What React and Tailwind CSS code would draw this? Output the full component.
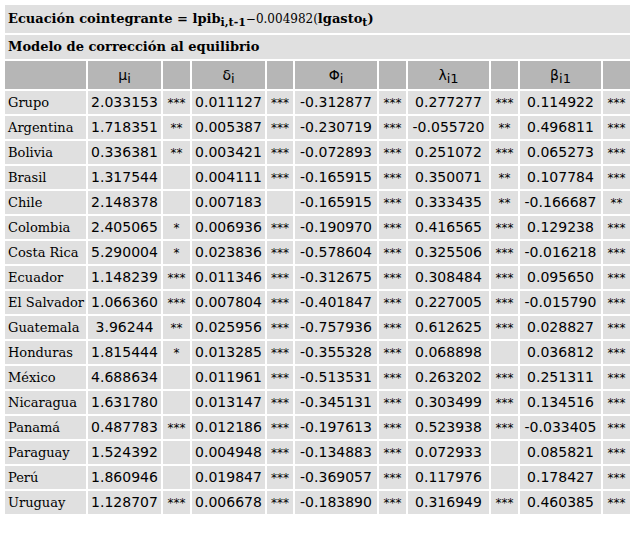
const rows = [
  ['Grupo', '2.033153', '***', '0.011127', '***', '-0.312877', '***', '0.277277', '***', '0.114922', '***'],
  ['Argentina', '1.718351', '**', '0.005387', '***', '-0.230719', '***', '-0.055720', '**', '0.496811', '***'],
  ['Bolivia', '0.336381', '**', '0.003421', '***', '-0.072893', '***', '0.251072', '***', '0.065273', '***'],
  ['Brasil', '1.317544', '', '0.004111', '***', '-0.165915', '***', '0.350071', '**', '0.107784', '***'],
  ['Chile', '2.148378', '', '0.007183', '', '-0.165915', '***', '0.333435', '**', '-0.166687', '**'],
  ['Colombia', '2.405065', '*', '0.006936', '***', '-0.190970', '***', '0.416565', '***', '0.129238', '***'],
  ['Costa Rica', '5.290004', '*', '0.023836', '***', '-0.578604', '***', '0.325506', '***', '-0.016218', '***'],
  ['Ecuador', '1.148239', '***', '0.011346', '***', '-0.312675', '***', '0.308484', '***', '0.095650', '***'],
  ['El Salvador', '1.066360', '***', '0.007804', '***', '-0.401847', '***', '0.227005', '***', '-0.015790', '***'],
  ['Guatemala', '3.96244', '**', '0.025956', '***', '-0.757936', '***', '0.612625', '***', '0.028827', '***'],
  ['Honduras', '1.815444', '*', '0.013285', '***', '-0.355328', '***', '0.068898', '', '0.036812', '***'],
  ['México', '4.688634', '', '0.011961', '***', '-0.513531', '***', '0.263202', '***', '0.251311', '***'],
  ['Nicaragua', '1.631780', '', '0.013147', '***', '-0.345131', '***', '0.303499', '***', '0.134516', '***'],
  ['Panamá', '0.487783', '***', '0.012186', '***', '-0.197613', '***', '0.523938', '***', '-0.033405', '***'],
  ['Paraguay', '1.524392', '', '0.004948', '***', '-0.134883', '***', '0.072933', '', '0.085821', '***'],
  ['Perú', '1.860946', '', '0.019847', '***', '-0.369057', '***', '0.117976', '', '0.178427', '***'],
  ['Uruguay', '1.128707', '***', '0.006678', '***', '-0.183890', '***', '0.316949', '***', '0.460385', '***'],
];

const widths = [81, 73, 27, 73, 26, 82, 27, 81, 27, 81, 27];

const serif = "font-['DejaVu_Serif',serif]";
const sans = "font-['DejaVu_Sans',sans-serif]";

const Head = ({ sym, sub }) => (
  <span>
    {sym}
    <sub className="text-[13px]">{sub}</sub>
  </span>
);

export default function App() {
  return (
    <div className="bg-white min-h-[537px] pt-[3px] pl-[3px] text-black">
      <table className="table-fixed border-separate border-spacing-[2px] w-[629px]">
        <colgroup>
          {widths.map((w, i) => (
            <col key={i} style={{ width: w }} />
          ))}
        </colgroup>
        <tbody>
          <tr>
            <td colSpan={11} className={`bg-[#e0e0e0] h-[28px] px-[3px] text-[13px] font-bold whitespace-nowrap ${serif}`}>
              Ecuación cointegrante = lpib<sub className="text-[11px]">i,t-1</sub>
              <span className="font-normal text-[12px]">−0.004982(</span>lgasto<sub className="text-[11px]">t</sub>)
            </td>
          </tr>
          <tr>
            <td colSpan={11} className={`bg-[#e0e0e0] h-[24px] px-[3px] text-[13px] font-bold ${serif}`}>
              Modelo de corrección al equilibrio
            </td>
          </tr>
          <tr className={`h-[28px] text-[14px] text-center ${sans}`}>
            <td className="bg-[#b6b6b6]"></td>
            <td className="bg-[#b6b6b6]"><Head sym="μ" sub="i" /></td>
            <td className="bg-[#b6b6b6]"></td>
            <td className="bg-[#b6b6b6]"><Head sym="δ" sub="i" /></td>
            <td className="bg-[#b6b6b6]"></td>
            <td className="bg-[#b6b6b6]"><Head sym="Φ" sub="i" /></td>
            <td className="bg-[#b6b6b6]"></td>
            <td className="bg-[#b6b6b6]"><Head sym="λ" sub="i1" /></td>
            <td className="bg-[#b6b6b6]"></td>
            <td className="bg-[#b6b6b6]"><Head sym="β" sub="i1" /></td>
            <td className="bg-[#b6b6b6]"></td>
          </tr>
          {rows.map((r) => (
            <tr key={r[0]} className="h-[23px]">
              {r.map((c, i) =>
                i === 0 ? (
                  <td key={i} className={`bg-[#e0e0e0] px-[3px] text-[13px] whitespace-nowrap ${serif}`}>
                    {c}
                  </td>
                ) : (
                  <td
                    key={i}
                    className={`bg-[#e0e0e0] p-0 text-center whitespace-nowrap ${sans} ${i % 2 === 0 ? 'text-[12px]' : 'text-[14px]'}`}
                  >
                    {c}
                  </td>
                )
              )}
            </tr>
          ))}
        </tbody>
      </table>
    </div>
  );
}
